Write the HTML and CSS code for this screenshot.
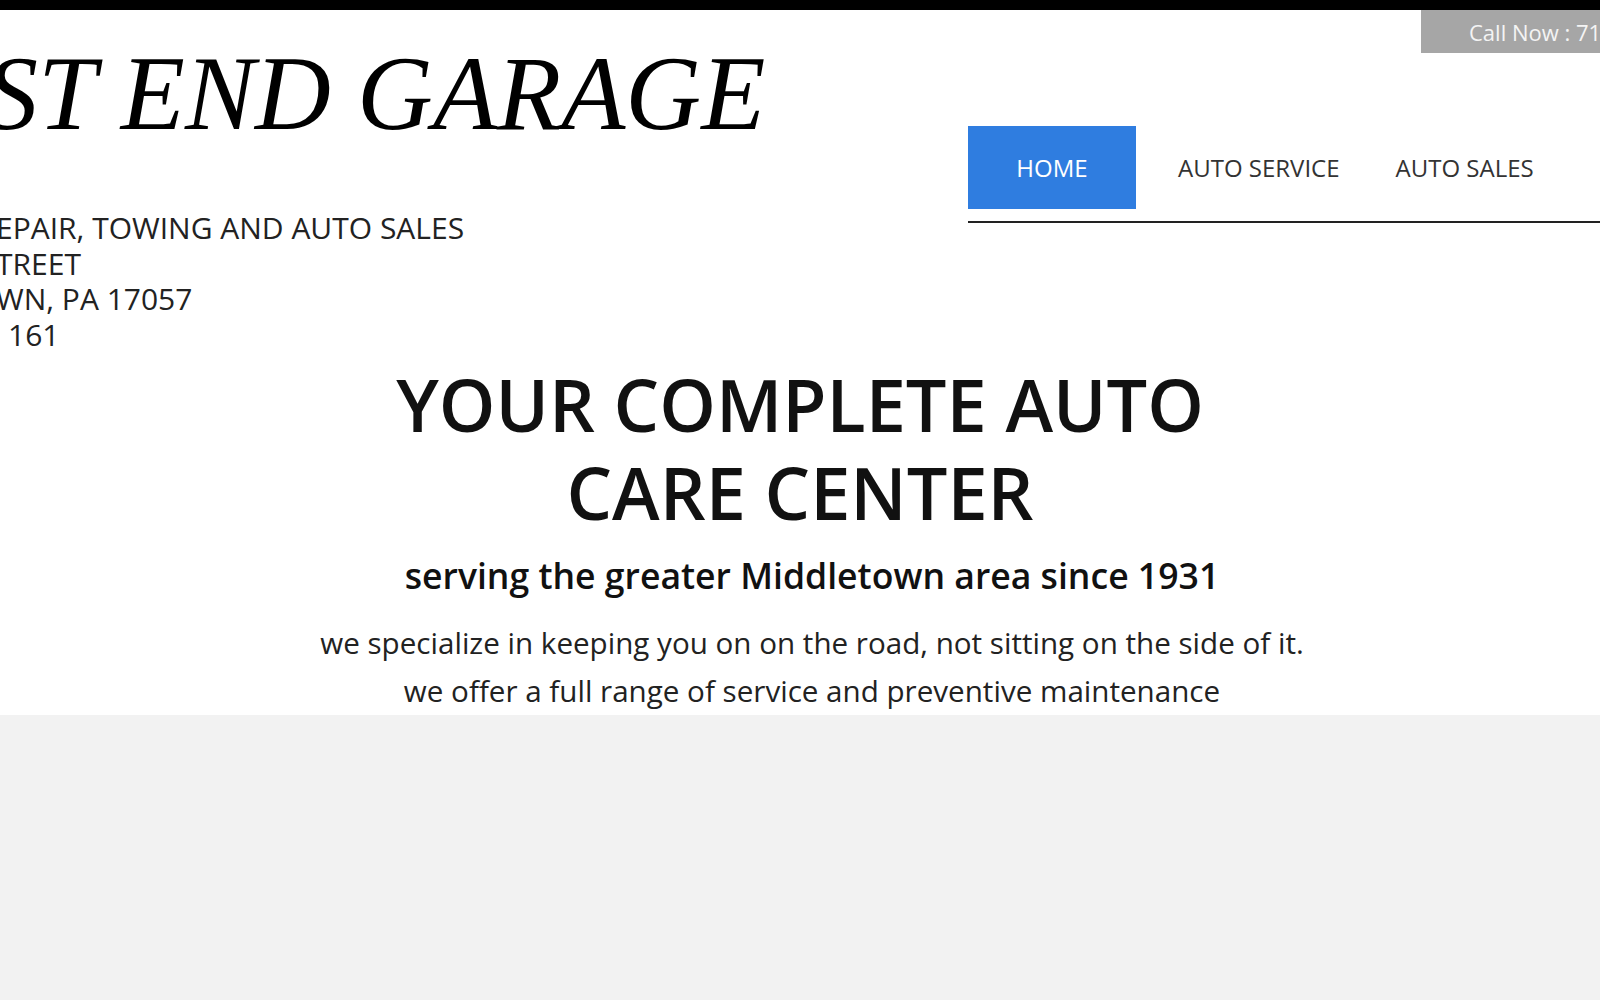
FILE: index.html
```html
<!DOCTYPE html>
<html lang="en">
<head>
  <meta charset="UTF-8">
  <meta name="viewport" content="width=device-width, initial-scale=1.0">
  <title>West End Garage</title>
  <link rel="stylesheet" href="styles.css">
</head>
<body>
  <div class="top-bar"></div>

  <!-- 页眉 -->
  <header class="site-header">
    <div class="brand">
      <h1 class="brand-title">WEST END GARAGE</h1>
      <p class="brand-info">
        <span>EPAIR, TOWING AND AUTO SALES</span>
        <span>TREET</span>
        <span>WN, PA 17057</span>
        <span class="phone">161</span>
      </p>
    </div>
    <div class="header-right">
      <div class="call-now">Call Now : 717-944-4161</div>
      <nav class="main-nav">
        <a href="#" class="active">HOME</a>
        <a href="#">AUTO SERVICE</a>
        <a href="#">AUTO SALES</a>
      </nav>
    </div>
  </header>

  <!-- 主要介绍 -->
  <section class="hero">
    <h2>YOUR COMPLETE AUTO<br>CARE CENTER</h2>
    <h3>serving the greater Middletown area since 1931</h3>
    <p>we specialize in keeping you on on the road, not sitting on the side of it.</p>
    <p>we offer a full range of service and preventive maintenance</p>
  </section>

  <section class="content"></section>
</body>
</html>
```

FILE: styles.css
```css
* {
  margin: 0;
  padding: 0;
  box-sizing: border-box;
}

html, body {
  height: 100%;
}

body {
  font-family: 'Open Sans', 'Liberation Sans', sans-serif;
  background-color: #f2f2f2;
  color: #222;
  overflow-x: hidden;
}

.top-bar {
  height: 10px;
  background-color: #000;
}

.site-header {
  display: flex;
  width: 1884px;
  margin-left: calc(50% - 942px);
  background-color: #fff;
}

.brand {
  flex: 1;
  padding-top: 31px;
}

.brand-title {
  margin-left: -24px;
  font-family: 'Liberation Serif', serif;
  font-style: italic;
  font-weight: normal;
  font-size: 105px;
  line-height: 1;
  color: #000;
  white-space: nowrap;
}

.brand-info {
  margin-top: 64px;
  margin-left: 138px;
  font-size: 30px;
  line-height: 35.5px;
  color: #222;
}

.brand-info span {
  display: block;
}

.brand-info .phone {
  padding-left: 12px;
}

.header-right {
  width: 774px;
  display: flex;
  flex-direction: column;
}

.call-now {
  align-self: flex-end;
  width: 321px;
  height: 43px;
  padding-left: 48px;
  line-height: 45px;
  font-size: 22px;
  color: #f4f4f4;
  background-color: #a6a6a6;
  white-space: nowrap;
}

.main-nav {
  display: flex;
  margin-top: 73px;
  padding-bottom: 12px;
  border-bottom: 2px solid #222;
}

.main-nav a {
  display: block;
  height: 83px;
  line-height: 83px;
  padding: 0 28px;
  font-size: 24px;
  color: #333;
  text-decoration: none;
}

.main-nav a.active {
  width: 168px;
  margin-right: 14px;
  text-align: center;
  color: #fff;
  background-color: #2f7de0;
}

.hero {
  background-color: #fff;
  text-align: center;
  color: #111;
  padding-top: 8px;
  padding-bottom: 3px;
}

.hero h2 {
  font-size: 72px;
  font-weight: 600;
  line-height: 88px;
}

.hero h3 {
  margin-top: 14px;
  padding-left: 24px;
  font-size: 35.6px;
  font-weight: 600;
  line-height: 50px;
}

.hero p {
  padding-left: 24px;
  font-size: 29.6px;
  line-height: 42px;
  color: #222;
}

.hero h3 + p {
  margin-top: 22px;
}

.hero p + p {
  margin-top: 6px;
}

.content {
  min-height: 286px;
}
```
